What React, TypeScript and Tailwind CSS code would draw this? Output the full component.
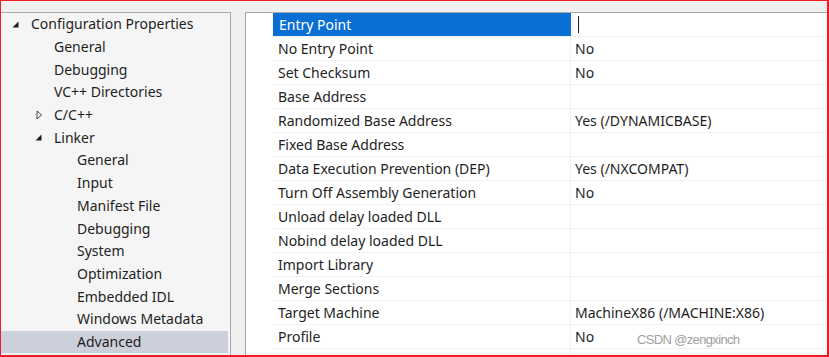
import React from 'react';

type TreeItem = {
  label: string;
  level: 0 | 1 | 2;
  arrow?: 'open' | 'closed';
  selected?: boolean;
};

const TREE: TreeItem[] = [
  { label: 'Configuration Properties', level: 0, arrow: 'open' },
  { label: 'General', level: 1 },
  { label: 'Debugging', level: 1 },
  { label: 'VC++ Directories', level: 1 },
  { label: 'C/C++', level: 1, arrow: 'closed' },
  { label: 'Linker', level: 1, arrow: 'open' },
  { label: 'General', level: 2 },
  { label: 'Input', level: 2 },
  { label: 'Manifest File', level: 2 },
  { label: 'Debugging', level: 2 },
  { label: 'System', level: 2 },
  { label: 'Optimization', level: 2 },
  { label: 'Embedded IDL', level: 2 },
  { label: 'Windows Metadata', level: 2 },
  { label: 'Advanced', level: 2, selected: true },
];

const INDENT = ['pl-[10px]', 'pl-[33px]', 'pl-[56px]'];

const PROPS: [string, string][] = [
  ['Entry Point', ''],
  ['No Entry Point', 'No'],
  ['Set Checksum', 'No'],
  ['Base Address', ''],
  ['Randomized Base Address', 'Yes (/DYNAMICBASE)'],
  ['Fixed Base Address', ''],
  ['Data Execution Prevention (DEP)', 'Yes (/NXCOMPAT)'],
  ['Turn Off Assembly Generation', 'No'],
  ['Unload delay loaded DLL', ''],
  ['Nobind delay loaded DLL', ''],
  ['Import Library', ''],
  ['Merge Sections', ''],
  ['Target Machine', 'MachineX86 (/MACHINE:X86)'],
  ['Profile', 'No'],
  ['CLR Thread Attribute', ''],
];

function Arrow({ kind }: { kind?: 'open' | 'closed' }) {
  if (kind === 'open') {
    return (
      <svg width="7" height="7" viewBox="0 0 7 7" className="ml-[1px]">
        <polygon points="6.5,0.5 6.5,6.5 0.5,6.5" fill="#1e1e1e" />
      </svg>
    );
  }
  if (kind === 'closed') {
    return (
      <svg width="7" height="10" viewBox="0 0 7 10" className="ml-[2px]">
        <polygon points="1,1 5.5,5 1,9" fill="none" stroke="#444" strokeWidth="1" />
      </svg>
    );
  }
  return null;
}

export default function App() {
  return (
    <div
      className="relative w-[829px] h-[357px] overflow-hidden bg-[#f0f0f0] border-t border-l border-r-2 border-b-2 border-[#ee1c25] pt-[11px] flex text-[14px] text-[#1e1e1e]"
      style={{ fontFamily: '"Noto Sans", "Open Sans", sans-serif' }}
    >
      {/* category tree */}
      <div className="w-[230px] shrink-0 bg-[#f5f5f5] border-t border-r border-[#a8a8a8]">
        {TREE.map((item, i) => (
          <div
            key={i}
            className={`h-[22.7px] flex items-center ${INDENT[item.level]} ${item.selected ? 'bg-[#ccd0da] mr-[2px]' : ''}`}
          >
            <span className="w-[20px] flex items-center">
              <Arrow kind={item.arrow} />
            </span>
            <span className="leading-none whitespace-nowrap">{item.label}</span>
          </div>
        ))}
      </div>

      <div className="w-[14px] shrink-0" />

      {/* property grid */}
      <div className="flex-1 bg-white border-t border-l border-[#a8a8a8] flex">
        <div className="w-[26px] shrink-0" />
        <div className="flex-1">
          {PROPS.map(([name, value], i) => (
            <div key={i} className="h-[24px] flex border-b border-[#f1f1f1]">
              <div
                className={`w-[298px] shrink-0 flex items-center pl-[6px] whitespace-nowrap ${i === 0 ? 'bg-[#0a6fd2] text-white mr-[1px] ml-[1px] pl-[5px]' : ''}`}
              >
                {name}
              </div>
              <div className="flex-1 flex items-center pl-[4px] border-l border-[#f1f1f1] whitespace-nowrap">
                {i === 0 ? <span className="w-px h-[17px] bg-[#1e1e1e] ml-[1px]" /> : value}
              </div>
            </div>
          ))}
        </div>
      </div>

      <div
        className="absolute left-[636px] top-[329px] text-[13px] text-[#a0a0a0] tracking-[-0.65px] whitespace-nowrap"
        style={{ fontFamily: '"Liberation Sans", Arial, sans-serif' }}
      >
        CSDN @zengxinch
      </div>
    </div>
  );
}
